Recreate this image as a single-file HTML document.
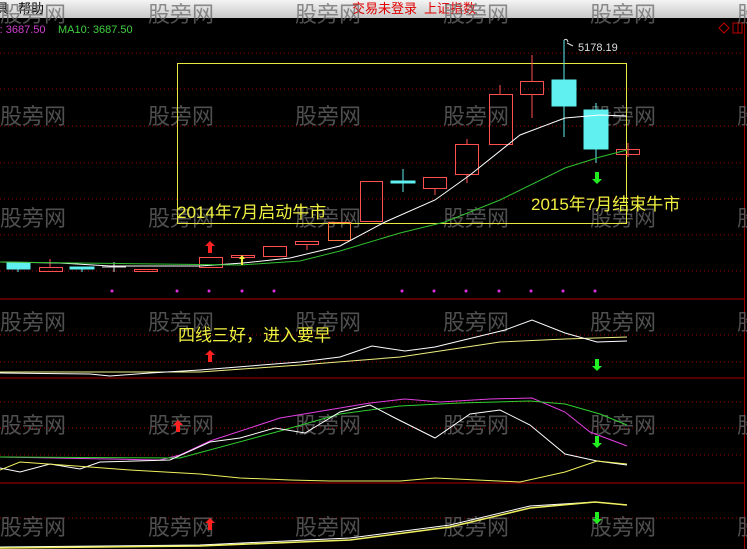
<!DOCTYPE html><html><head><meta charset="utf-8"><style>
html,body{margin:0;padding:0;background:#000;width:747px;height:549px;overflow:hidden}
</style></head><body>
<svg width="747" height="549" xmlns="http://www.w3.org/2000/svg" style="position:absolute;left:0;top:0;font-family:'Liberation Sans','Noto Sans CJK SC',sans-serif">
<defs><linearGradient id="g" x1="0" y1="0" x2="0" y2="1"><stop offset="0" stop-color="#f4f4f4"/><stop offset="1" stop-color="#c8c8c8"/></linearGradient></defs>
<rect width="747" height="549" fill="#000"/>
<rect width="747" height="18" fill="url(#g)"/>
<text x="-4" y="13" font-size="13" fill="#000">具</text>
<text x="18" y="13" font-size="13" fill="#000">帮助</text>
<text x="352" y="13" font-size="13" fill="#e00000">交易未登录</text>
<text x="424" y="13" font-size="13" fill="#e00000">上证指数</text>
<text x="-4" y="33" font-size="11" fill="#d040d0">): 3687.50</text>
<text x="58" y="33" font-size="11" fill="#40d040">MA10: 3687.50</text>
<path d="M724 23l5 5-5 5-5-5z" fill="none" stroke="#c00000"/>
<rect x="733" y="23" width="9" height="10" fill="none" stroke="#c00000"/><line x1="738" y1="23" x2="738" y2="33" stroke="#c00000"/>
<line x1="744.5" y1="18" x2="744.5" y2="549" stroke="#a00000"/>
<g stroke="#a00000" stroke-dasharray="1,3">
<line x1="0" y1="53" x2="744" y2="53"/><line x1="0" y1="89" x2="744" y2="89"/><line x1="0" y1="126" x2="744" y2="126"/><line x1="0" y1="163" x2="744" y2="163"/><line x1="0" y1="199" x2="744" y2="199"/><line x1="0" y1="235" x2="744" y2="235"/><line x1="0" y1="271" x2="744" y2="271"/>
<line x1="0" y1="335" x2="744" y2="335"/><line x1="0" y1="362" x2="744" y2="362"/>
<line x1="0" y1="402" x2="744" y2="402"/><line x1="0" y1="428" x2="744" y2="428"/><line x1="0" y1="455" x2="744" y2="455"/>
<line x1="0" y1="518" x2="744" y2="518"/></g>
<g stroke="#b00000"><line x1="0" y1="299" x2="745" y2="299"/><line x1="0" y1="378" x2="745" y2="378"/><line x1="0" y1="483" x2="745" y2="483"/></g>
<g font-size="22" fill="#6a6a6a" opacity="0.75">
<text x="0" y="22">股旁网</text><text x="148" y="22">股旁网</text><text x="295" y="22">股旁网</text><text x="443" y="22">股旁网</text><text x="590" y="22">股旁网</text><text x="737" y="22">股</text>
<text x="0" y="124">股旁网</text><text x="148" y="124">股旁网</text><text x="295" y="124">股旁网</text><text x="443" y="124">股旁网</text><text x="590" y="124">股旁网</text><text x="737" y="124">股</text>
<text x="0" y="226">股旁网</text><text x="148" y="226">股旁网</text><text x="295" y="226">股旁网</text><text x="443" y="226">股旁网</text><text x="590" y="226">股旁网</text><text x="737" y="226">股</text>
<text x="0" y="330">股旁网</text><text x="148" y="330">股旁网</text><text x="295" y="330">股旁网</text><text x="443" y="330">股旁网</text><text x="590" y="330">股旁网</text><text x="737" y="330">股</text>
<text x="0" y="433">股旁网</text><text x="148" y="433">股旁网</text><text x="295" y="433">股旁网</text><text x="443" y="433">股旁网</text><text x="590" y="433">股旁网</text><text x="737" y="433">股</text>
<text x="0" y="535">股旁网</text><text x="148" y="535">股旁网</text><text x="295" y="535">股旁网</text><text x="443" y="535">股旁网</text><text x="590" y="535">股旁网</text><text x="737" y="535">股</text>
</g>
<rect x="177.5" y="63.5" width="449" height="160" fill="none" stroke="#e8e840"/>
<g fill="none" stroke="#ff5050">
<line x1="50" y1="259" x2="50" y2="267"/><rect x="39.5" y="267.5" width="23" height="4"/>
<rect x="134.5" y="269.5" width="23" height="2"/>
<line x1="178" y1="266" x2="190" y2="266"/>
<rect x="199.5" y="257.5" width="23" height="10"/>
<rect x="231.5" y="255.5" width="23" height="2"/>
<rect x="263.5" y="246.5" width="23" height="10"/>
<line x1="307" y1="244" x2="307" y2="250"/><rect x="295.5" y="241.5" width="23" height="3"/>
<rect x="328.5" y="222.5" width="22" height="18" stroke="#ff7040"/>
<rect x="360.5" y="181.5" width="22" height="40"/>
<line x1="435" y1="188" x2="435" y2="195"/><rect x="423.5" y="177.5" width="23" height="11"/>
<line x1="467" y1="139" x2="467" y2="144"/><line x1="467" y1="174" x2="467" y2="183"/><rect x="455.5" y="144.5" width="23" height="30"/>
<line x1="500" y1="85" x2="500" y2="94"/><rect x="489.5" y="94.5" width="23" height="50"/>
<line x1="532" y1="55" x2="532" y2="81"/><line x1="532" y1="94" x2="532" y2="118"/><rect x="520.5" y="81.5" width="23" height="13"/>
<line x1="628" y1="143" x2="628" y2="157"/><rect x="616.5" y="149.5" width="23" height="5"/>
</g>
<g fill="#60f0f0" stroke="#60f0f0">
<rect x="7" y="263" width="23" height="6"/><line x1="18" y1="269" x2="18" y2="272"/>
<rect x="70" y="267" width="24" height="2"/><line x1="82" y1="269" x2="82" y2="272"/>
<line x1="102" y1="267" x2="126" y2="267" stroke="#ddd"/><line x1="114" y1="262" x2="114" y2="272" stroke="#ddd"/>
<rect x="391" y="181" width="24" height="2"/><line x1="403" y1="169" x2="403" y2="192"/>
<line x1="564" y1="40" x2="564" y2="137"/><rect x="552" y="80" width="24" height="26"/>
<line x1="596" y1="103" x2="596" y2="163"/><rect x="584" y="110" width="24" height="39"/>
</g>
<path d="M564 40q3-2 4 2M567 43l6 3" stroke="#ddd" fill="none"/>
<text x="578" y="51" font-size="11" fill="#ddd">5178.19</text>
<polyline fill="none" stroke="#fff" points="0,262 60,263 110,266 200,266 243,263 290,258 340,246 385,222 435,200 470,175 520,135 565,118 600,115 627,116"/>
<polyline fill="none" stroke="#30c030" points="0,262 240,265 300,261 340,251 400,233 445,222 500,200 565,168 600,157 627,150"/>
<text x="177" y="218" font-size="17" fill="#f0f040">2014年7月启动牛市</text>
<text x="531" y="210" font-size="17" fill="#f0f040">2015年7月结束牛市</text>
<g fill="#e030e0"><circle cx="112" cy="291" r="1.5"/><circle cx="177" cy="291" r="1.5"/><circle cx="209" cy="291" r="1.5"/><circle cx="242" cy="291" r="1.5"/><circle cx="274" cy="291" r="1.5"/><circle cx="402" cy="291" r="1.5"/><circle cx="434" cy="291" r="1.5"/><circle cx="466" cy="291" r="1.5"/><circle cx="499" cy="291" r="1.5"/><circle cx="531" cy="291" r="1.5"/><circle cx="563" cy="291" r="1.5"/><circle cx="595" cy="291" r="1.5"/></g>
<g fill="#ff2020"><path d="M210 241l-5 5h3v7h4v-7h3z"/><path d="M210 350l-5 5h3v7h4v-7h3z"/><path d="M178 420l-5 5h3v7h4v-7h3z"/><path d="M210 518l-5 5h3v7h4v-7h3z"/></g>
<path d="M242 255l-3 4h2v6h2v-6h2z" fill="#f0f040"/>
<g fill="#20ee20"><path d="M597 184l-5-5h3v-7h4v7h3z"/><path d="M597 371l-5-5h3v-7h4v7h3z"/><path d="M597 448l-5-5h3v-7h4v7h3z"/><path d="M597 524l-5-5h3v-7h4v7h3z"/></g>
<text x="178" y="341" font-size="17" fill="#f0f040">四线三好，进入要早</text>
<polyline fill="none" stroke="#f0f080" points="0,372 200,372 300,365 400,357 500,342 565,339 627,337"/>
<polyline fill="none" stroke="#fff" points="0,373 90,374 110,376 150,373 200,370 300,362 340,357 372,346 405,351 435,347 505,330 532,320 565,333 597,342 627,341"/>
<polyline fill="none" stroke="#e040e0" points="0,457 160,460 180,455 210,441 280,418 370,403 405,399 440,402 490,399 532,398 565,412 590,432 627,446"/>
<polyline fill="none" stroke="#30d030" points="0,457 180,458 280,431 340,414 400,406 460,403 530,401 565,404 600,414 627,425"/>
<polyline fill="none" stroke="#fff" points="0,468 20,472 50,464 80,469 100,462 170,460 210,442 240,438 275,428 305,433 340,412 370,405 395,418 435,438 470,414 500,410 530,425 565,454 597,461 627,465"/>
<polyline fill="none" stroke="#f0f060" points="0,470 20,462 90,467 130,470 200,474 240,478 290,480 330,481 400,481 435,478 520,482 565,472 597,461 627,464"/>
<polyline fill="none" stroke="#fff" points="0,547 200,545 350,538 450,525 530,506 595,502 627,505"/>
<polyline fill="none" stroke="#f0f060" stroke-width="1.5" points="0,548 200,546 350,540 450,527 530,508 595,502 627,505"/>
</svg>
</body></html>
